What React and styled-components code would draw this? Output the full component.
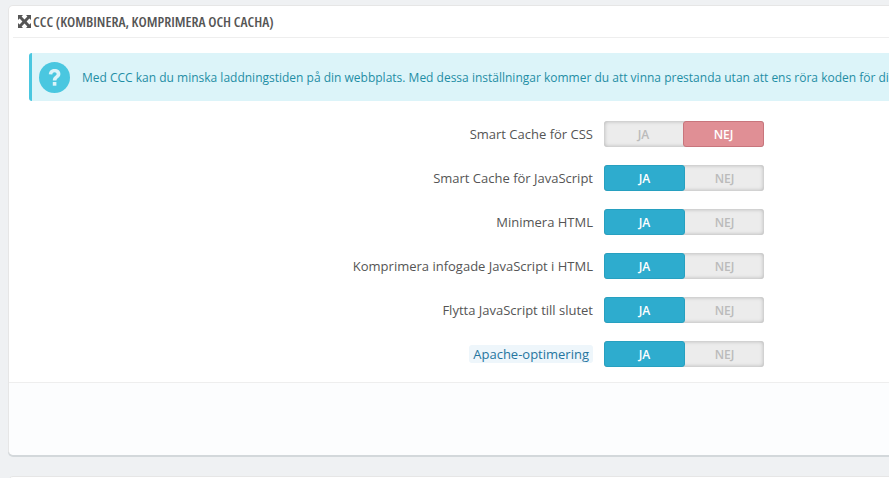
import React from "react";
import styled, { createGlobalStyle } from "styled-components";

const GlobalStyle = createGlobalStyle`
  html, body {
    margin: 0;
    height: 100%;
    overflow: hidden;
    background: #eff1f3;
    font-family: "Open Sans", "Liberation Sans", sans-serif;
  }
`;

const Page = styled.div`
  width: 889px;
  height: 478px;
  padding: 5px 0 0 8px;
  box-sizing: border-box;
  overflow: hidden;
`;

const Panel = styled.section`
  width: 920px;
  height: 450px;
  box-sizing: border-box;
  display: flex;
  flex-direction: column;
  background: #fff;
  border: 1px solid #e6e6e6;
  border-bottom: 0;
  border-radius: 5px;
  box-shadow: 0 2px 0 #d3d8db;
`;

const Heading = styled.h3`
  margin: 0 0 0 4px;
  height: 31px;
  display: flex;
  align-items: center;
  gap: 2px;
  padding: 0 0 0 5px;
  border-bottom: 1px solid #eeeeee;
  font-size: 14.5px;
  font-weight: 400;
  color: #555;
  white-space: nowrap;
`;

const HeadingText = styled.span`
  font-family: "Open Sans", "Liberation Sans", sans-serif;
  font-weight: 600;
  font-stretch: 75%;
  text-transform: uppercase;
`;

const Alert = styled.div`
  margin: 15px 0 0 20px;
  height: 48px;
  display: flex;
  align-items: center;
  gap: 12px;
  padding-left: 7px;
  background: #dcf4f9;
  border-left: 3px solid #4ac7e0;
  border-radius: 3px;
  color: #1f8ea5;
  font-size: 12px;
  white-space: nowrap;
  overflow: hidden;
`;

const Form = styled.div`
  display: flex;
  flex-direction: column;
  gap: 18px;
  margin-top: 20px;
  padding-bottom: 15px;
  border-bottom: 1px solid #eeeeee;
`;

const Row = styled.div`
  display: flex;
  align-items: center;
  justify-content: flex-end;
  gap: 11px;
  width: 755px;
  height: 26px;
`;

const Label = styled.span`
  font-size: 13px;
  color: #555;
  white-space: nowrap;
`;

const HintLabel = styled(Label)`
  padding: 0 4px;
  height: 18px;
  line-height: 18px;
  border-radius: 3px;
  background: #eef6fb;
  color: #25759f;
`;

const Toggle = styled.div`
  display: flex;
  width: 160px;
  height: 26px;
  flex: none;
  border-radius: 3px;
  background: #ececec;
  box-shadow: inset 0 0 4px rgba(0, 0, 0, 0.28);
`;

const Choice = styled.span`
  flex: 1 1 0;
  min-width: 0;
  box-sizing: border-box;
  display: flex;
  align-items: center;
  justify-content: center;
  font-size: 12px;
  font-weight: 600;
  color: ${(p) => (p.$on ? "#fff" : "#bbbbbb")};
  border-radius: 3px;
  background: ${(p) => (p.$on ? (p.$tone === "no" ? "#e08f95" : "#2eacce") : "transparent")};
  border: ${(p) =>
    p.$on ? `1px solid ${p.$tone === "no" ? "#c8757c" : "#27a0c0"}` : "0"};
`;

const Footer = styled.div`
  flex: 1;
  background: #fcfdfe;
  border-radius: 0 0 5px 5px;
`;

const NextPanel = styled.div`
  width: 920px;
  height: 20px;
  margin-top: 21px;
  background: #fff;
  border: 1px solid #e6e6e6;
  border-radius: 5px;
`;

const MoveIcon = () => (
  <svg width="13" height="13" viewBox="0 0 13 13" fill="#555" style={{ flex: "none" }}>
    <path d="M0 0h5L3.600 1.600 6.500 4.400 9.400 1.600 8 0h5v5l-1.600-1.400-2.800 2.900 2.800 2.900L13 8v5H8l1.400-1.600-2.900-2.800-2.900 2.800L5 13H0V8l1.600 1.400 2.800-2.900-2.800-2.900L0 5z" />
  </svg>
);

const HelpIcon = () => (
  <svg width="31" height="31" viewBox="0 0 31 31" style={{ flex: "none" }}>
    <circle cx="15.5" cy="15.5" r="15.5" fill="#4ac7e0" />
    <path
      d="M9.800 12.200c.3-3.400 2.700-5.200 5.900-5.200 3.300 0 5.700 2 5.700 4.900 0 3.900-4 3.900-4 6.600h-3.600c0-4.200 3.800-4.600 3.800-6.500 0-1-.8-1.700-2-1.700-1.300 0-2.100.8-2.300 2.200z"
      fill="#dcf4f9"
    />
    <rect x="13.800" y="20" width="3.600" height="3.700" fill="#dcf4f9" />
  </svg>
);

const rows = [
  { label: "Smart Cache för CSS", value: "no" },
  { label: "Smart Cache för JavaScript", value: "yes" },
  { label: "Minimera HTML", value: "yes" },
  { label: "Komprimera infogade JavaScript i HTML", value: "yes" },
  { label: "Flytta JavaScript till slutet", value: "yes" },
  { label: "Apache-optimering", value: "yes", hint: true },
];

const App = () => {
  return (
    <Page>
      <GlobalStyle />
      <Panel>
        <Heading>
          <MoveIcon />
          <HeadingText>CCC (Kombinera, komprimera och cacha)</HeadingText>
        </Heading>
        <Alert>
          <HelpIcon />
          Med CCC kan du minska laddningstiden på din webbplats. Med dessa inställningar kommer du att vinna prestanda utan att ens röra koden för din webbplats.
        </Alert>
        <Form>
          {rows.map((row) => (
            <Row key={row.label}>
              {row.hint ? <HintLabel>{row.label}</HintLabel> : <Label>{row.label}</Label>}
              <Toggle>
                <Choice $on={row.value === "yes"} $tone="yes">JA</Choice>
                <Choice $on={row.value === "no"} $tone="no">NEJ</Choice>
              </Toggle>
            </Row>
          ))}
        </Form>
        <Footer />
      </Panel>
      <NextPanel />
    </Page>
  );
};

export default App;
